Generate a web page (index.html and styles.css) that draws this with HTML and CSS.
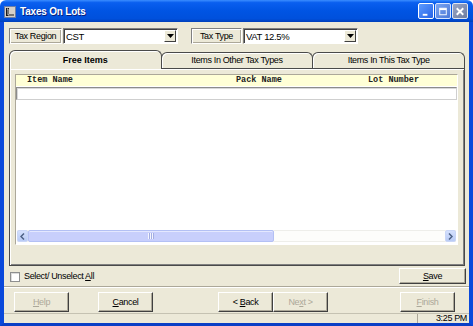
FILE: index.html
```html
<!DOCTYPE html>
<html>
<head>
<meta charset="utf-8">
<link rel="stylesheet" href="styles.css">
</head>
<body>
<div class="window">
  <div class="titlebar">
    <svg class="appicon" width="12" height="12" viewBox="0 0 12 12">
      <rect x="0.5" y="0.5" width="11" height="11" fill="#d4d0c8" stroke="#6b7fa8"/>
      <path d="M2 2h3v6h5v2H2z" fill="#1a1a1a"/>
      <path d="M3 3h1v6h6v0" fill="none" stroke="#fff" stroke-width="0.8"/>
    </svg>
    <span class="title">Taxes On Lots</span>
    <div class="tbtns">
      <div class="tbtn min"><svg width="15" height="15" viewBox="0 0 15 15"><rect x="4" y="10" width="5" height="2" fill="#fff"/></svg></div>
      <div class="tbtn max"><svg width="15" height="15" viewBox="0 0 15 15"><rect x="4" y="4" width="7" height="7" fill="none" stroke="#fff" stroke-width="1"/><rect x="4" y="4" width="7" height="2" fill="#fff"/></svg></div>
      <div class="tbtn close"><svg width="15" height="15" viewBox="0 0 15 15"><path d="M4 4L11 11M11 4L4 11" stroke="#fff" stroke-width="2"/></svg></div>
    </div>
  </div>
  <div class="client">
    <div class="toprow">
      <div class="lbl w53">Tax Region</div>
      <div class="combo"><span class="val">CST</span><span class="ddbtn"><svg width="7" height="4" viewBox="0 0 7 4"><path d="M0 0h7L3.5 4z" fill="#000"/></svg></span></div>
      <div class="lbl w51 gapl">Tax Type</div>
      <div class="combo"><span class="val">VAT 12.5%</span><span class="ddbtn"><svg width="7" height="4" viewBox="0 0 7 4"><path d="M0 0h7L3.5 4z" fill="#000"/></svg></span></div>
    </div>
    <div class="tabs">
      <div class="tab sel">Free Items</div>
      <div class="tab">Items In Other Tax Types</div>
      <div class="tab">Items In This Tax Type</div>
    </div>
    <div class="panel">
      <div class="grid">
        <div class="ghead">
          <span class="c1">Item Name</span>
          <span class="c2">Pack Name</span>
          <span class="c3">Lot Number</span>
        </div>
        <div class="editrow"></div>
        <div class="gbody"></div>
        <div class="hscroll">
          <div class="arrow"><svg width="5" height="7" viewBox="0 0 5 7"><path d="M4 0.5L1 3.5L4 6.5" fill="none" stroke="#4d6185" stroke-width="1.5"/></svg></div>
          <div class="thumb"><span class="grip"></span></div>
          <div class="track"></div>
          <div class="arrow"><svg width="5" height="7" viewBox="0 0 5 7"><path d="M1 0.5L4 3.5L1 6.5" fill="none" stroke="#4d6185" stroke-width="1.5"/></svg></div>
        </div>
      </div>
    </div>
    <div class="selrow">
      <label class="chk"><span class="box"></span><span>Select/ Unselect <u>A</u>ll</span></label>
      <div class="btn save"><span><u>S</u>ave</span></div>
    </div>
    <div class="sep"></div>
    <div class="btnrow">
      <div class="btn b55 dis help"><span><u>H</u>elp</span></div>
      <div class="btn b55 cancel"><span><u>C</u>ancel</span></div>
      <div class="btn b55 back"><span>&lt; <u>B</u>ack</span></div>
      <div class="btn b55 dis next"><span>Ne<u>x</u>t &gt;</span></div>
      <div class="btn b55 dis finish"><span><u>F</u>inish</span></div>
    </div>
    <div class="status">
      <div class="spanel"></div>
      <div class="stime">3:25 PM</div>
    </div>
  </div>
</div>
</body>
</html>
```
FILE: styles.css
```css
* { box-sizing: border-box; }
html, body { margin: 0; padding: 0; }
body {
  width: 473px; height: 326px; overflow: hidden;
  font-family: "Liberation Sans", Arial, sans-serif;
  font-size: 9px; letter-spacing: -0.35px; color: #000;
}
.window { width: 473px; height: 326px; display: flex; flex-direction: column; }
.titlebar {
  height: 22px; flex: none; display: flex; align-items: center;
  background: linear-gradient(to bottom, #3b8dff 0%, #0a5fef 12%, #0054e3 50%, #0050dc 85%, #003fba 100%);
  border-radius: 6px 6px 0 0; padding-left: 4px;
}
.appicon { flex: none; margin-top: 1px; }
.title {
  color: #fff; font-weight: bold; font-size: 10px; letter-spacing: -0.2px;
  margin-left: 4px; text-shadow: 1px 1px 0 #0a1e7a;
}
.tbtns { margin-left: auto; margin-right: 5px; display: flex; gap: 1px; }
.tbtn {
  width: 16px; height: 16px; border: 1px solid #fff; border-radius: 2px;
  display: flex; align-items: center; justify-content: center;
}
.tbtn.min { background: linear-gradient(135deg, #5d9bff, #2763e6); }
.tbtn.max { background: linear-gradient(135deg, #7aa4f0, #4b78d8); border-color: #d8e4ff; }
.tbtn.close { background: linear-gradient(135deg, #9aa6c6, #6f7d9f); border-color: #e0e6f0; }
.client {
  flex: 1; display: flex; flex-direction: column; background: #ece9d8;
  border-left: 4px solid #0a49db; border-right: 4px solid #0a49db; border-bottom: 3px solid #0a3fc6;
}
.toprow { display: flex; height: 16px; margin-top: 6px; padding-left: 5px; }
.lbl {
  height: 16px; line-height: 14px; text-align: center;
  border: 1px solid; border-color: #808080 #fff #fff #808080;
  box-shadow: inset 1px 1px 0 #fff, inset -1px -1px 0 #aca899;
}
.w53 { width: 53px; }
.w51 { width: 51px; }
.gapl { margin-left: 13px; }
.combo {
  width: 115px; height: 16px; margin-left: 1px; background: #fff; display: flex; align-items: center;
  border: 1px solid; border-color: #808080 #fff #fff #808080;
  box-shadow: inset 1px 1px 0 #404040;
  padding: 1px 1px 1px 2px;
}
.combo .val { flex: 1; font-size: 9.5px; padding-top: 1px; }
.ddbtn {
  width: 12px; height: 12px; background: #ece9d8; display: flex; align-items: center; justify-content: center;
  border: 1px solid; border-color: #fff #404040 #404040 #fff;
}
.tabs { display: flex; height: 18px; margin-top: 6px; margin-left: 5px; width: 456px; align-items: flex-end; }
.tab {
  flex: 1; height: 16px; border: 1px solid #4a4a4a; border-bottom: none;
  border-radius: 6px 6px 0 0; text-align: center; line-height: 15px; background: #ece9d8;
  margin-left: -1px; box-shadow: inset 1px 1px 0 #fff; position: relative;
}
.tab:first-child { margin-left: 0; }
.tab.sel { font-weight: bold; letter-spacing: 0; line-height: 18px; z-index: 2; margin-bottom: -1px; height: 19px; }
.panel {
  width: 456px; height: 198px; margin-left: 5px; position: relative; z-index: 1;
  border: 1px solid #4a4a4a; box-shadow: inset 1px 1px 0 #fff, inset -1px -1px 0 #808080;
  padding: 5px 6px 20px 5px;
}
.grid {
  width: 443px; height: 171px; background: #fff; display: flex; flex-direction: column;
  border: 1px solid; border-color: #aca899 #fff #fff #aca899;
}
.ghead {
  height: 11px; background: #ffffd6; display: flex;
  font-family: "Liberation Mono", monospace; font-weight: bold; font-size: 8.5px; letter-spacing: 0;
  line-height: 11px; color: #222;
}
.c1 { padding-left: 11px; width: 220px; }
.c2 { width: 132px; }
.editrow { height: 13px; margin-top: 1px; border: 1px solid; border-color: #8c8c8c #cfcfcf #cfcfcf #8c8c8c; box-shadow: inset 1px 1px 0 #d8d8d8; }
.gbody { flex: 1; }
.hscroll { height: 12px; display: flex; margin: 0 1px 2px 1px; background: #f3f2ee; }
.arrow {
  width: 11px; height: 12px; background: linear-gradient(#d4e0fd, #b9cbf5); border: 1px solid #c9d6f7;
  border-radius: 2px; display: flex; align-items: center; justify-content: center;
}
.thumb {
  width: 246px; height: 12px; background: #c8cffc; border: 1px solid #b3c0f4; border-radius: 2px;
  display: flex; align-items: center; justify-content: center;
  box-shadow: inset 0 1px 0 #e4e8ff;
}
.grip { width: 6px; height: 6px; background: repeating-linear-gradient(90deg, #fff 0 1px, #9aa6dc 1px 2px); opacity: 0.8; }
.track { flex: 1; background: #fdfdfb; border-top: 1px solid #eeeeea; border-bottom: 1px solid #eeeeea; }
.selrow { display: flex; height: 16px; margin-top: 2px; align-items: center; padding-left: 6px; }
.chk { display: flex; align-items: center; gap: 4px; }
.box { width: 10px; height: 10px; background: #fff; border: 1px solid #8e8f8f; box-shadow: inset 1px 1px 0 #dcdcdc; margin-top: 1px; }
.btn {
  height: 16px; display: flex; align-items: center; justify-content: center; background: #ece9d8;
  border: 1px solid; border-color: #fff #404040 #404040 #fff;
  box-shadow: inset -1px -1px 0 #aca899;
}
.save { width: 67px; margin-left: auto; margin-right: 3px; }
.sep { height: 2px; margin-top: 2px; border-top: 1px solid #aca899; border-bottom: 1px solid #fff; }
.btnrow { display: flex; height: 20px; margin-top: 4px; padding-left: 10px; }
.b55 { width: 55px; height: 20px; }
.dis { color: #aca899; }
.cancel { margin-left: 29px; }
.back { margin-left: 65px; }
.next { margin-left: 0px; }
.finish { margin-left: 72px; }
.status { height: 10px; margin-top: 1px; display: flex; border-top: 1px solid #c5c2b2; background: #ece9d8; }
.spanel { flex: 1; border-right: 1px solid #aca899; }
.stime { width: 51px; text-align: right; line-height: 9px; padding-right: 2px; font-size: 9px; }
```
